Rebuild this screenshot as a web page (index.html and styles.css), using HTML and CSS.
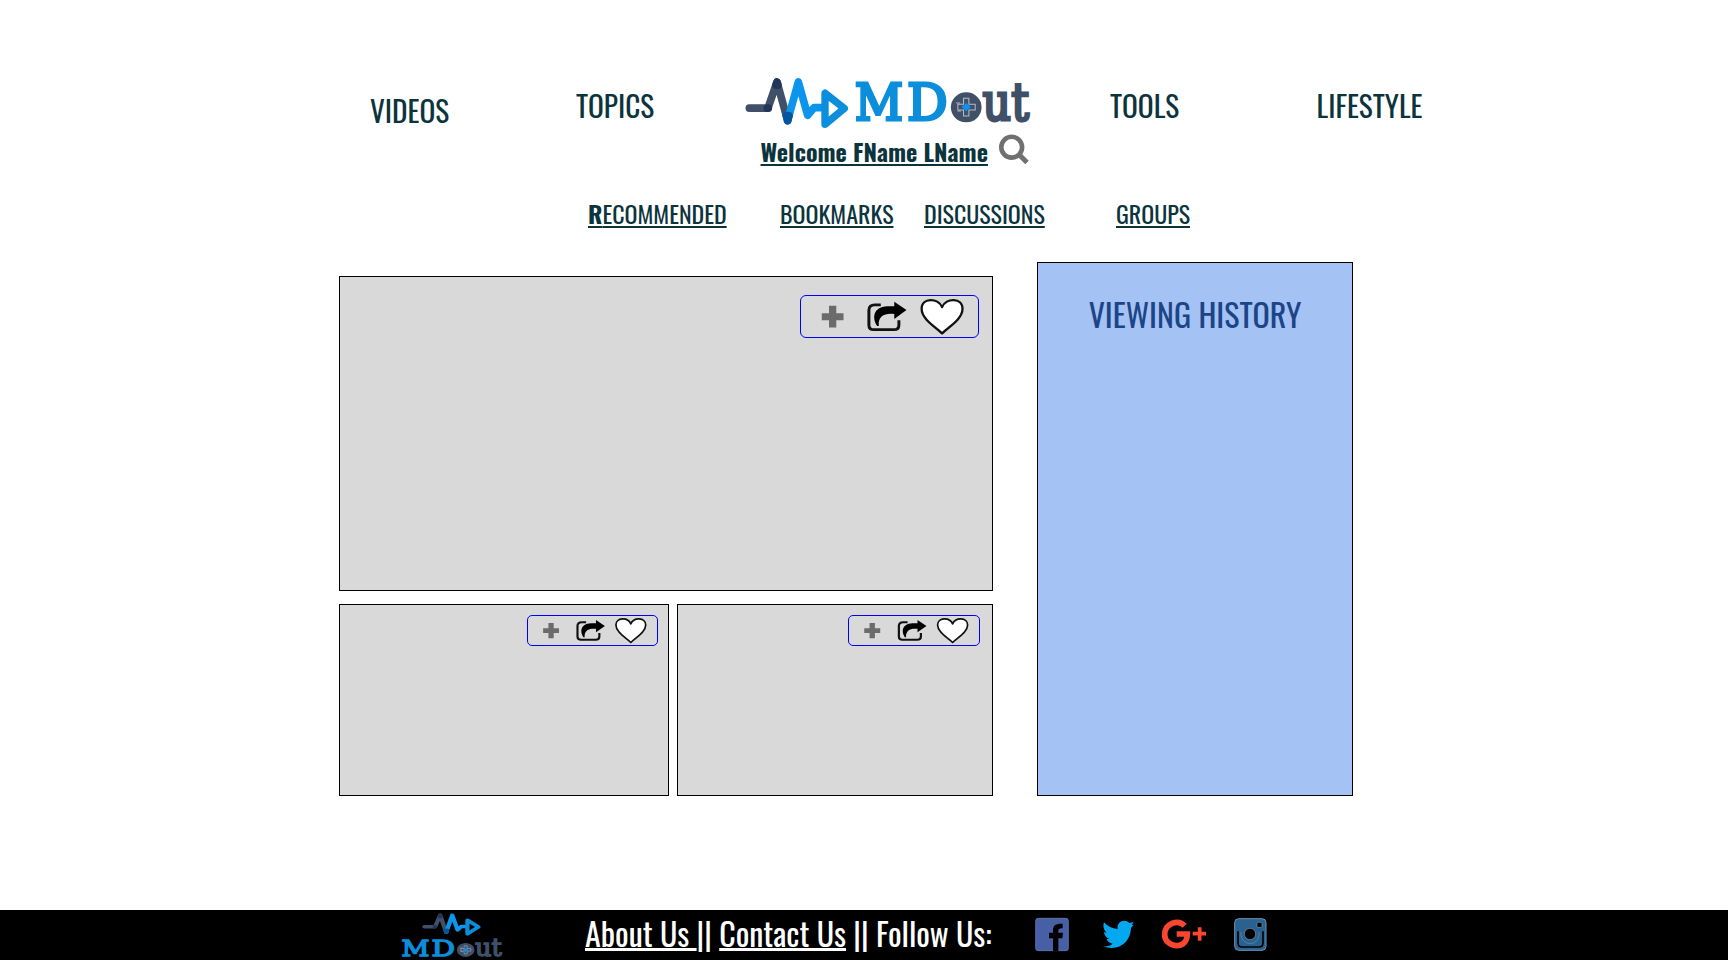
FILE: index.html
```
<!DOCTYPE html>
<html lang="en">
<head>
<meta charset="utf-8">
<title>MDout</title>
<link rel="stylesheet" href="styles.css">
</head>
<body>
<svg class="defs" width="0" height="0" aria-hidden="true">
  <symbol id="pulse" viewBox="45 50 312 154" preserveAspectRatio="none">
    <g fill="none" stroke-linecap="round" stroke-linejoin="round">
      <path d="M58 142H114L141 65L173 179" stroke="#3f5068" stroke-width="23"/>
      <path d="M112 142H115M138 74L141 65L144 74" stroke="#22365a" stroke-width="23"/>
      <path d="M173 179L205 65L233 163L252 141H283" stroke="#0d95ee" stroke-width="23"/>
      <path d="M169 165L173 179L177 165" stroke="#0455a0" stroke-width="23"/>
      <path d="M285 98V190L343 143Z" stroke="#0b8edb" stroke-width="22"/>
    </g>
  </symbol>
  <symbol id="wordmark" viewBox="372 64 530 126" preserveAspectRatio="none">
    <g class="slab">
      <g fill="#0b8edb" stroke="#0b8edb" stroke-width="9">
        <text x="374" y="182" font-size="151" textLength="145" lengthAdjust="spacingAndGlyphs">M</text>
        <text x="531" y="182" font-size="151" textLength="122" lengthAdjust="spacingAndGlyphs">D</text>
      </g>
      <g fill="#3f5068" stroke="#3f5068" stroke-width="9">
        <text x="666" y="182" font-size="146" textLength="84" lengthAdjust="spacingAndGlyphs">o</text>
        <text x="757" y="182" font-size="154" textLength="139" lengthAdjust="spacingAndGlyphs">ut</text>
      </g>
    </g>
    <ellipse cx="708" cy="143" rx="46" ry="45" fill="#3f5068"/>
    <path d="M700 116H716V134H735V151H716V169H700V151H683V134H700Z" fill="none" stroke="#b4bdc8" stroke-width="3"/>
    <path d="M708 130L722 142L708 155L694 142Z" fill="#0d95ee"/>
    <path d="M678 130H690M682 154H692" stroke="#b4bdc8" stroke-width="3"/>
  </symbol>
  <symbol id="actions" viewBox="60 45 537 129" preserveAspectRatio="none">
    <path d="M145 76H167V99H189V121H167V144H145V121H123V99H145Z" fill="#6b6b6b"/>
    <path d="M302 73H284Q266 73 266 90V136Q266 151 281 151H342Q357 151 357 136V121" fill="none" stroke="#111" stroke-width="9"/>
    <path d="M343 63L380 89L343 117V102C315 98 293 108 296 139H291C276 116 277 79 322 77H343Z" fill="#000"/>
    <path d="M488 163C473 145 426 120 426 85C426 50 476 49 488 80C500 49 550 50 550 85C550 120 503 145 488 163Z" fill="#fff" stroke="#111" stroke-width="7" stroke-linejoin="round"/>
  </symbol>
</svg>

<header class="header">
  <a class="nav nav-videos">VIDEOS</a>
  <a class="nav nav-topics">TOPICS</a>
  <div class="brand">
    <div class="logo">
      <svg width="104" height="52"><use href="#pulse"/></svg>
      <svg width="177" height="42"><use href="#wordmark"/></svg>
    </div>
    <div class="user">
      <a class="welcome">Welcome FName LName</a>
      <svg width="32" height="32" viewBox="0 0 32 32" fill="none" stroke="#707070"><circle cx="13.7" cy="14.2" r="10.4" stroke-width="4.6"/><path d="M20.5 21L29 29.5" stroke-width="5"/></svg>
    </div>
  </div>
  <a class="nav nav-tools">TOOLS</a>
  <a class="nav">LIFESTYLE</a>
</header>

<nav class="subnav">
  <a class="sub-recommended"><b>R</b>ECOMMENDED</a>
  <a class="sub-bookmarks">BOOKMARKS</a>
  <a class="sub-discussions">DISCUSSIONS</a>
  <a>GROUPS</a>
</nav>

<main class="main">
  <div class="videos">
    <section class="card card-large"><div class="actions actions-large"><svg><use href="#actions"/></svg></div></section>
    <div class="row">
      <section class="card card-left"><div class="actions"><svg><use href="#actions"/></svg></div></section>
      <section class="card card-right"><div class="actions"><svg><use href="#actions"/></svg></div></section>
    </div>
  </div>
  <aside class="history">VIEWING HISTORY</aside>
</main>

<footer class="footer">
  <div class="footer-logo">
    <svg class="footer-pulse" width="59" height="23"><use href="#pulse"/></svg>
    <svg width="102" height="19"><use href="#wordmark"/></svg>
  </div>
  <div class="links"><u>About Us </u>|| <u>Contact Us</u> || Follow Us:</div>
  <svg class="social" width="240" height="50" viewBox="60 30 720 150">
    <rect x="77" y="55" width="98" height="97" rx="7" fill="#465fa5" stroke="#7787bd" stroke-width="2"/>
    <path d="M129 153V115H117V98H129V91C129 76 137 70 158 71V85C149 84 145 86 145 93V98H159L157 115H145V153Z" fill="#000"/>
    <path d="M282 67C293 79 306 86 323 87C319 64 345 54 358 69L371 66L365 75L371 74L363 84C362 126 326 156 279 139C291 140 301 137 308 131C298 130 292 124 290 117H298C287 113 283 105 282 96L290 98C281 90 278 78 282 67Z" fill="#03a9f0"/>
    <path d="M524 77C503 56 464 71 464 104C464 143 532 153 532 102H500" fill="none" stroke="#fa4530" stroke-width="17"/>
    <path d="M569 82V122M548 101H588" stroke="#fa4530" stroke-width="11"/>
    <rect x="674" y="56" width="94" height="95" rx="12" fill="#2b618e" stroke="#6d92b2" stroke-width="3"/>
    <path d="M684 94V128Q684 141 697 141H746Q759 141 759 128V94" fill="none" stroke="#000" stroke-width="5"/>
    <circle cx="720" cy="102" r="29" fill="#2b618e"/>
    <path d="M693 96C688 142 752 142 747 96" fill="none" stroke="#5482a8" stroke-width="3"/>
    <circle cx="720" cy="102" r="17" fill="#000" stroke="#7398b5" stroke-width="2"/>
    <rect x="741" y="67" width="15" height="15" rx="2" fill="#000" stroke="#7398b5" stroke-width="2"/>
  </svg>
</footer>
</body>
</html>
```
FILE: styles.css
```
* { box-sizing: border-box; }

body {
  margin: 0;
  height: 960px;
  display: flex;
  flex-direction: column;
  background: #fff;
  color: #0c343d;
  font-family: Oswald, "Roboto Condensed", "Liberation Sans", sans-serif;
  font-weight: 400;
  white-space: nowrap;
  overflow: hidden;
}

svg { display: block; flex: none; }
.defs { position: absolute; }
.slab { font-family: "DejaVu Serif", serif; }

.header {
  display: flex;
  height: 195px;
  padding: 77px 0 0 370px;
}

.nav {
  flex: none;
  padding-top: 6px;
  font-size: 29.33px;
  line-height: 44px;
}
.nav-videos { width: 206px; padding-top: 11px; }
.nav-topics { width: 169px; }
.nav-tools { width: 206.5px; }

.brand { width: 365px; flex: none; }
.logo { display: flex; gap: 5px; height: 56px; }
.logo svg + svg { margin-top: 4px; }

.user { display: flex; padding-left: 15.5px; }
.welcome {
  width: 237px;
  font-size: 24px;
  line-height: 36px;
  font-weight: 700;
}

.welcome, .subnav a, .links u {
  text-decoration: underline;
  text-decoration-skip-ink: none;
  text-decoration-thickness: 2px;
  text-underline-offset: 2px;
}

.subnav {
  display: flex;
  height: 67px;
  padding-left: 588px;
  font-size: 24px;
  line-height: 37px;
}
.subnav a { flex: none; }
.subnav b { font-weight: 700; }
.sub-recommended { width: 192px; }
.sub-bookmarks { width: 144px; }
.sub-discussions { width: 192px; }

.main {
  display: flex;
  gap: 44px;
  padding-left: 339px;
  height: 534px;
}
.videos {
  width: 654px;
  padding-top: 14px;
  display: flex;
  flex-direction: column;
  gap: 13px;
}
.row { display: flex; gap: 8px; }
.card {
  display: flex;
  justify-content: flex-end;
  align-items: flex-start;
  height: 192px;
  padding: 10px 10px 0 0;
  background: #d9d9d9;
  border: 1px solid #000;
}
.card-large { height: 315px; padding: 18px 13px 0 0; }
.card-left { width: 330px; }
.card-right { width: 316px; padding-right: 12px; }

.actions {
  width: 131px;
  height: 31px;
  border: 1px solid #00f;
  border-radius: 5px;
}
.card-right .actions { width: 132px; }
.actions svg { width: 100%; height: 100%; }
.actions-large { width: 179px; height: 43px; border-radius: 6px; }

.history {
  width: 316px;
  padding-top: 27px;
  background: #a4c2f4;
  border: 1px solid #000;
  color: #1c4587;
  font-size: 32px;
  line-height: 48px;
  text-align: center;
}

.footer {
  display: flex;
  height: 50px;
  margin-top: auto;
  padding-left: 401px;
  background: #000;
  color: #fff;
}
.footer-logo { width: 184px; padding-top: 3px; flex: none; }
.footer-pulse { margin: 0 0 2px 21px; }
.links {
  width: 445px;
  flex: none;
  font-size: 32px;
  line-height: 46px;
  white-space: pre;
}
.links u { text-decoration-thickness: 3px; text-underline-offset: 1px; }
```
